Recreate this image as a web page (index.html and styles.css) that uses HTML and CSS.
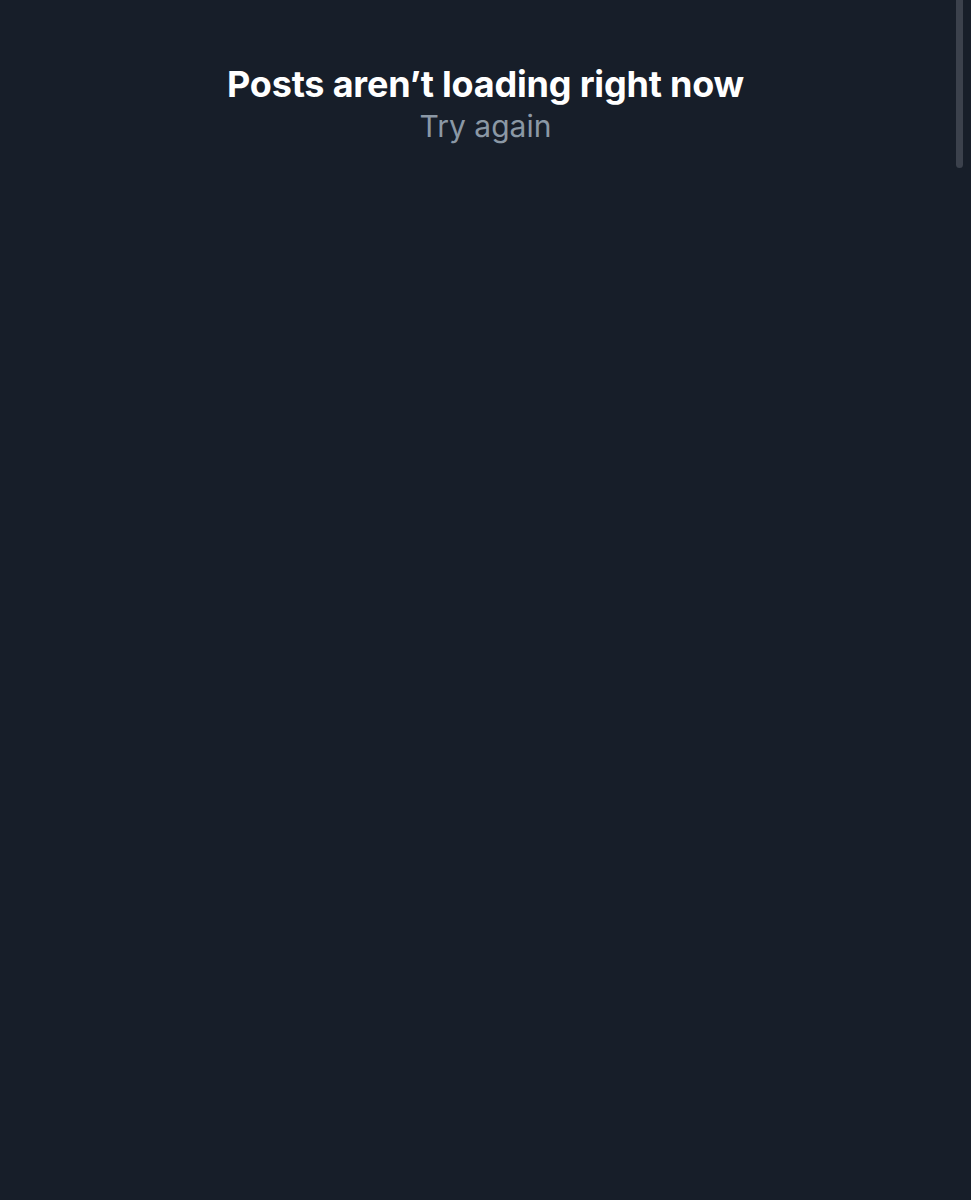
FILE: index.html
```html
<!DOCTYPE html>
<html lang="en">
<head>
    <meta charset="UTF-8">
    <meta name="viewport" content="width=device-width, initial-scale=1.0">
    <title>Posts</title>
    <link rel="stylesheet" href="styles.css">
</head>
<body>
    <main class="feed-error">
        <h1 class="error-title">Posts aren’t loading right now</h1>
        <button class="retry-button">Try again</button>
    </main>
    <div class="scrollbar"><div class="scrollbar-thumb"></div></div>
</body>
</html>
```

FILE: styles.css
```css
* {
    margin: 0;
    padding: 0;
    box-sizing: border-box;
}

body {
    background-color: #171e29;
    color: #e7e9ea;
    font-family: Inter, "Noto Sans", sans-serif;
    min-height: 100vh;
}

.feed-error {
    display: flex;
    flex-direction: column;
    align-items: center;
    padding-top: 62px;
}

.error-title {
    color: #ffffff;
    font-size: 36px;
    font-weight: 700;
    line-height: 44px;
    letter-spacing: -0.2px;
}

.retry-button {
    background: none;
    border: none;
    color: #8b98a5;
    font-family: inherit;
    font-size: 30px;
    line-height: 40px;
    cursor: pointer;
}

.scrollbar {
    position: fixed;
    top: 0;
    right: 8px;
    width: 7px;
    height: 100vh;
}

.scrollbar-thumb {
    width: 7px;
    height: 168px;
    background-color: #3b414c;
    border-radius: 0 0 4px 4px;
}
```
